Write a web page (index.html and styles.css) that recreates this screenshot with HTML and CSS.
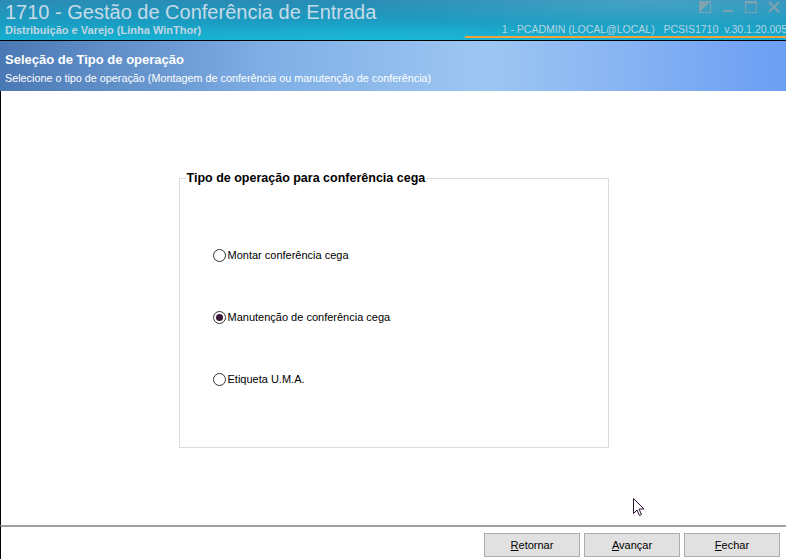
FILE: index.html
```html
<!DOCTYPE html>
<html lang="pt-BR">
<head>
  <meta charset="UTF-8">
  <title>1710 - Gestão de Conferência de Entrada</title>
  <link rel="stylesheet" href="styles.css">
</head>
<body>
  <div class="window">
    <div class="titlebar">
      <div class="title-left">
        <div class="app-title">1710 - Gestão de Conferência de Entrada</div>
        <div class="app-sub">Distribuição e Varejo (Linha WinThor)</div>
      </div>
      <div class="title-right">
        <div class="win-buttons">
          <svg width="12" height="12" viewBox="0 0 12 12"><rect x="0.5" y="0.5" width="11" height="11" fill="none" stroke="#7fa2b0"/><path d="M1 11 L11 1 L1 1 Z" fill="#7fa2b0"/></svg>
          <svg width="12" height="12" viewBox="0 0 12 12"><rect x="1" y="9" width="10" height="2" fill="#7fa2b0"/></svg>
          <svg width="12" height="12" viewBox="0 0 12 12"><rect x="0.5" y="0.5" width="11" height="11" fill="none" stroke="#7fa2b0"/><rect x="0.5" y="0.5" width="11" height="2" fill="#7fa2b0"/></svg>
          <svg width="12" height="12" viewBox="0 0 12 12"><path d="M1 1 L11 11 M11 1 L1 11" stroke="#7fa2b0" stroke-width="2"/></svg>
        </div>
        <div class="session">1 - PCADMIN (LOCAL@LOCAL)&nbsp;&nbsp;&nbsp;PCSIS1710&nbsp;&nbsp;v.30.1.20.005</div>
      </div>
    </div>

    <div class="step-header">
      <div class="step-title">Seleção de Tipo de operação</div>
      <div class="step-desc">Selecione o tipo de operação (Montagem de conferência ou manutenção de conferência)</div>
    </div>

    <div class="content">
      <fieldset class="group">
        <legend>Tipo de operação para conferência cega</legend>
        <label class="radio"><span class="dot"></span>Montar conferência cega</label>
        <label class="radio checked"><span class="dot"></span>Manutenção de conferência cega</label>
        <label class="radio"><span class="dot"></span>Etiqueta U.M.A.</label>
      </fieldset>
    </div>

    <div class="footer">
      <button class="btn"><u>R</u>etornar</button>
      <button class="btn"><u>A</u>vançar</button>
      <button class="btn"><u>F</u>echar</button>
    </div>

    <!-- mouse pointer -->
    <svg class="pointer" width="12" height="19" viewBox="0 0 12 19">
      <path d="M0.5 0.5 L0.5 15.5 L4 12 L6.5 17.5 L8.5 16.5 L6 11 L11 11 Z" fill="#fff" stroke="#2a1030" stroke-width="1"/>
    </svg>
  </div>
</body>
</html>
```

FILE: styles.css
```css
* {
  box-sizing: border-box;
}

body {
  margin: 0;
  font-family: "Liberation Sans", Arial, sans-serif;
  background: #fff;
}

.window {
  position: relative;
  width: 786px;
  height: 559px;
  overflow: hidden;
  display: flex;
  flex-direction: column;
}

/* top bar */
.titlebar {
  height: 41px;
  display: flex;
  justify-content: space-between;
  border-bottom: 1px solid #000;
  background:
    radial-gradient(ellipse 420px 40px at 650px 2px, rgba(120, 200, 225, 0.35), rgba(0, 0, 0, 0) 70%),
    radial-gradient(ellipse 500px 60px at 380px 60px, rgba(40, 200, 230, 0.6), rgba(0, 0, 0, 0) 70%),
    linear-gradient(180deg, #2a8cb4 0%, #1b9cc2 55%, #14b0d0 100%);
}

.title-left {
  padding: 0 0 0 5px;
}

.app-title {
  font-size: 20px;
  line-height: 24px;
  color: #c6dbe8;
  white-space: nowrap;
}

.app-sub {
  font-size: 11px;
  font-weight: bold;
  color: #c0d6e2;
  line-height: 13px;
  white-space: nowrap;
}

.title-right {
  display: flex;
  flex-direction: column;
  align-items: flex-end;
  min-width: 0;
}

.win-buttons {
  display: flex;
  gap: 11px;
  padding: 1px 6px 0 0;
  height: 23px;
}

.session {
  font-size: 10.5px;
  color: #b9d2de;
  white-space: nowrap;
  line-height: 13px;
  padding: 0 0 0 37px;
  margin-right: -1px;
  border-bottom: 2px solid #f2a23a;
}

/* step header */
.step-header {
  height: 50px;
  padding: 9px 5px 0;
  color: #fff;
  background: linear-gradient(90deg, #4a78b4 0%, #80b0e6 35%, #9ec6f2 62%, #6c9ef4 100%);
}

.step-title {
  font-size: 13px;
  font-weight: bold;
  line-height: 20px;
}

.step-desc {
  font-size: 10.8px;
  line-height: 16px;
}

/* main area */
.content {
  flex: 1;
  border-left: 1px solid #000;
  padding-top: 80px;
}

.group {
  width: 430px;
  height: 277px;
  margin: 0 auto;
  padding: 0;
  border: 1px solid #dcdcdc;
  display: flex;
  flex-direction: column;
  gap: 49px;
}

.group legend {
  font-size: 12.5px;
  font-weight: bold;
  color: #000;
  padding: 0 1px;
  margin-left: 6px;
}

.group .radio:first-of-type {
  margin-top: 64px;
}

.radio {
  display: flex;
  align-items: center;
  font-size: 11px;
  line-height: 13px;
  color: #000;
  margin-left: 33px;
}

.dot {
  width: 13px;
  height: 13px;
  border: 1px solid #333;
  border-radius: 50%;
  margin-right: 2px;
  display: flex;
  align-items: center;
  justify-content: center;
}

.checked .dot::after {
  content: "";
  width: 7px;
  height: 7px;
  border-radius: 50%;
  background: #3b1838;
}

/* bottom buttons */
.footer {
  height: 34px;
  border-top: 2px solid #a0a0a0;
  border-left: 1px solid #000;
  display: flex;
  justify-content: flex-end;
  gap: 4px;
  padding: 6px 6px 0 0;
}

.btn {
  width: 96px;
  height: 24px;
  background: #e1e1e1;
  border: 1px solid #adadad;
  font-family: "Liberation Sans", Arial, sans-serif;
  font-size: 11px;
  color: #000;
  padding: 0;
}

.pointer {
  position: absolute;
  left: 633px;
  top: 498px;
}
```
